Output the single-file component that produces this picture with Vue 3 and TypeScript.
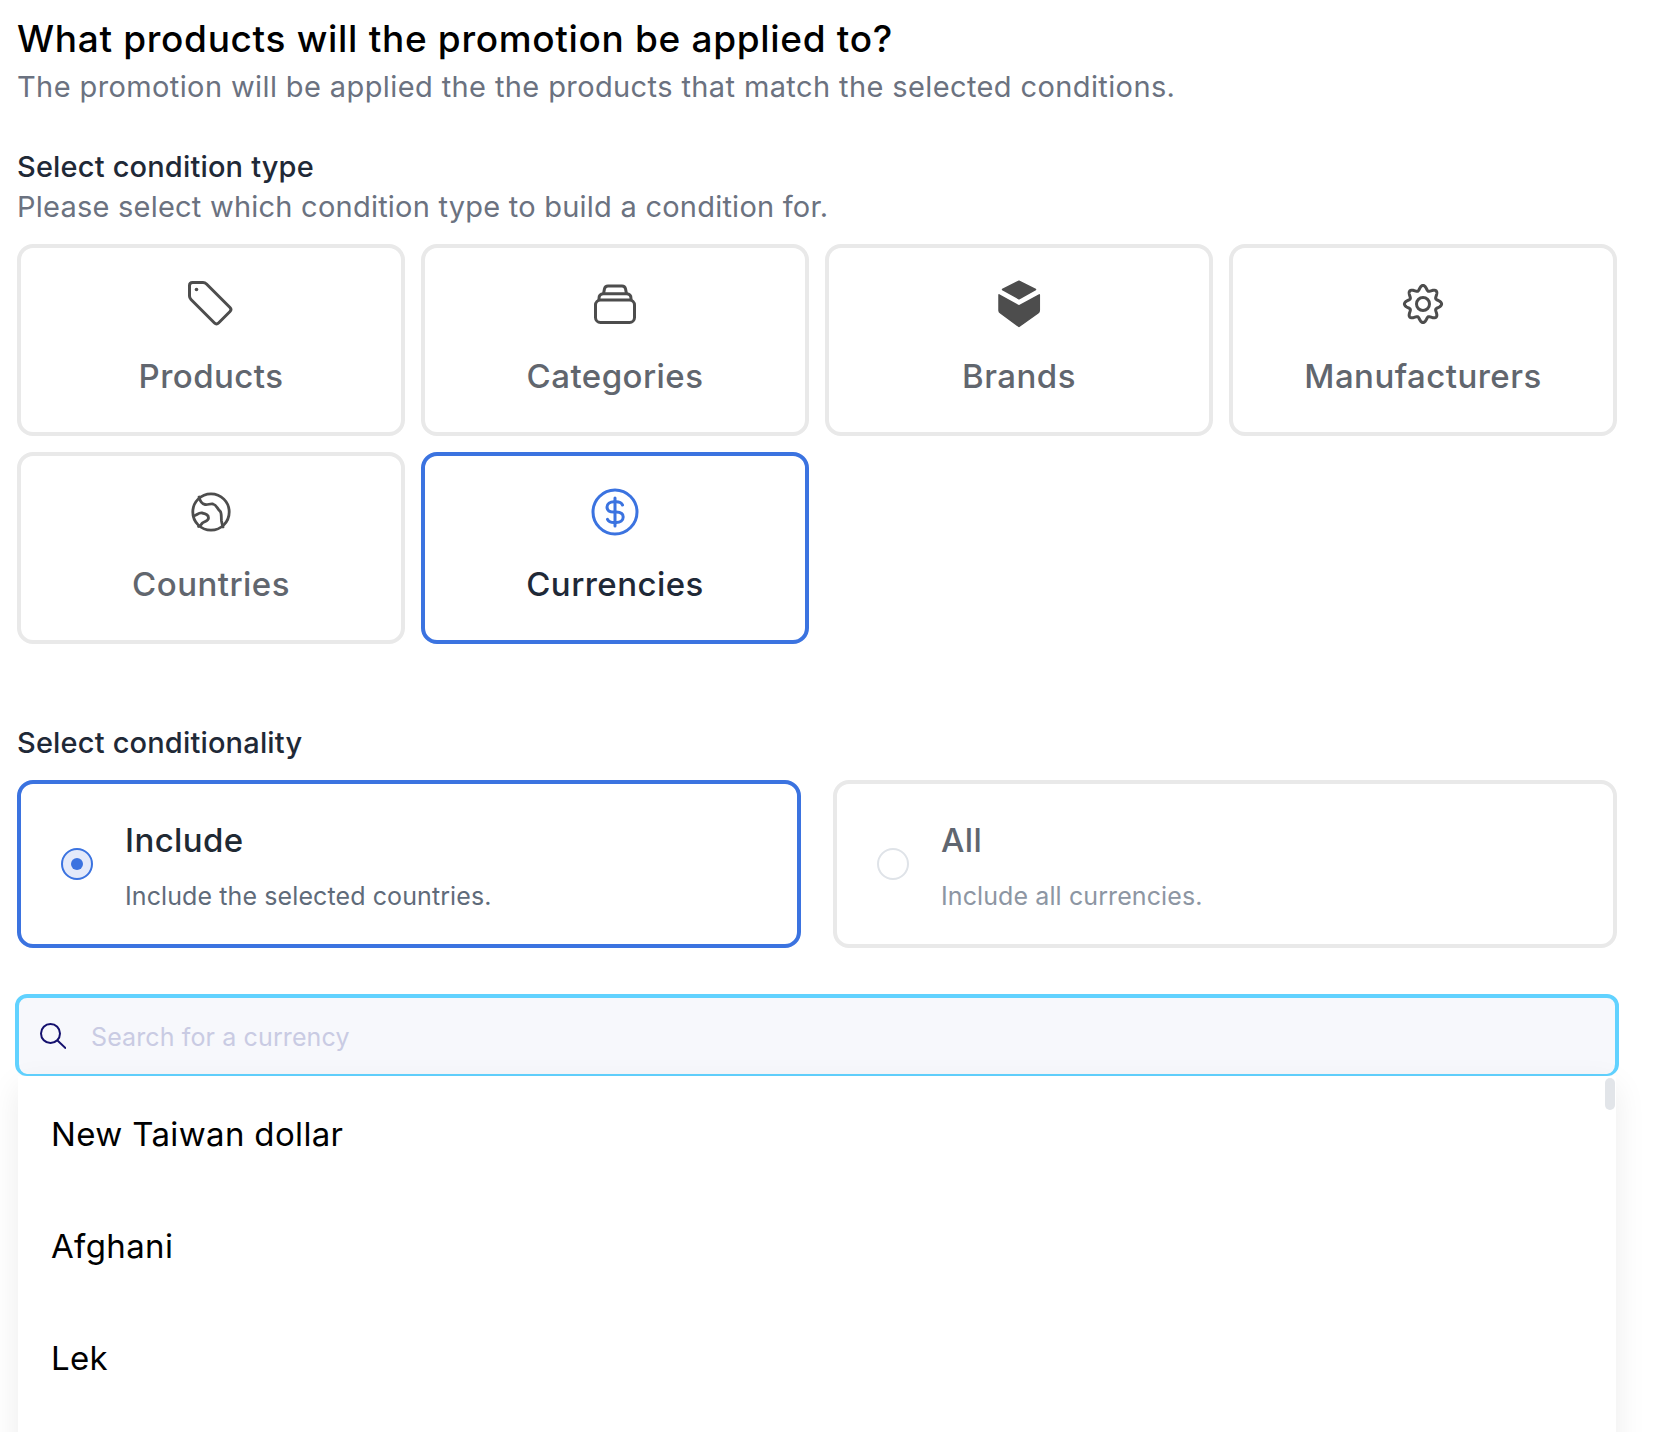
<script setup lang="ts">
const gearPath: string = (() => {
  const pts: string[] = []
  for (let i = 0; i < 240; i++) {
    const t = (i / 240) * Math.PI * 2
    const r = 16.2 + 2.4 * Math.cos(8 * t)
    pts.push(`${(24 + r * Math.sin(t)).toFixed(2)} ${(24 - r * Math.cos(t)).toFixed(2)}`)
  }
  return 'M' + pts.join('L') + 'Z'
})()

const currencies: string[] = ['New Taiwan dollar', 'Afghani', 'Lek']
</script>

<template>
  <main class="page">
    <h1 class="title">What products will the promotion be applied to?</h1>
    <p class="subtitle">The promotion will be applied the the products that match the selected conditions.</p>

    <h2 class="label first">Select condition type</h2>
    <p class="hint">Please select which condition type to build a condition for.</p>

    <div class="types">
      <div class="type">
        <svg class="icon" viewBox="0 0 48 48" fill="none" stroke="#4d4d4d" stroke-width="3" stroke-linejoin="round">
          <path d="M5.5 2.5H16q2 0 3.5 1.5L43 27.5q2 2 0 4L31.5 43q-2 2-4 0L4 19.5Q2.5 18 2.5 16V5.5q0-3 3-3Z" />
          <circle cx="9.5" cy="9.5" r="1.8" fill="#4d4d4d" stroke="none" />
        </svg>
        <span class="type-name">Products</span>
      </div>
      <div class="type">
        <svg class="icon" viewBox="0 0 48 48" fill="none" stroke="#4d4d4d" stroke-width="3">
          <rect x="4.5" y="20" width="39" height="22.5" rx="5" />
          <path d="M8 20v-1.5q0-4.5 4.5-4.7h23q4.500 .2 4.500 4.700V20" />
          <path d="M12.500 13.800l1-5q.6-2.800 3.500-2.800h14q2.900 0 3.500 2.800l1 5" />
        </svg>
        <span class="type-name">Categories</span>
      </div>
      <div class="type">
        <svg class="icon" viewBox="0 0 48 48" fill="#4d4d4d" stroke="#4d4d4d" stroke-width="1.500" stroke-linejoin="round">
          <path d="M24 1.200L40.500 9.500L24 18.800L7.500 9.500Z" />
          <path d="M4 14.800L24 26L44.300 14.800V30.500Q44.300 32 43 33L24 46.500L5.500 33Q4 32 4 30.500Z" />
        </svg>
        <span class="type-name">Brands</span>
      </div>
      <div class="type">
        <svg class="icon" viewBox="0 0 48 48" fill="none" stroke="#4d4d4d" stroke-width="3">
          <path :d="gearPath" />
          <circle cx="24" cy="24" r="6.500" />
        </svg>
        <span class="type-name">Manufacturers</span>
      </div>
      <div class="type">
        <svg class="icon" viewBox="0 0 48 48" fill="none" stroke="#4d4d4d" stroke-width="2.800" stroke-linecap="round" stroke-linejoin="round">
          <circle cx="24" cy="24" r="18.200" />
          <path d="M12 9c1 4 3 7 6 7.500c3 .5 5-1 8-.5c4 .8 4 5 7 7c2 2 1 6 1.500 10c.3 2 1 4 1.500 6" />
          <path d="M6.500 28c3-.5 5-3.500 8.500-3c3 .5 6.500 2 6.500 5c0 3-4 3.500-6 5c-1.500 1-1.500 3-4 3.500" />
        </svg>
        <span class="type-name">Countries</span>
      </div>
      <div class="type active">
        <svg class="icon" viewBox="0 0 48 48" fill="none" stroke="#3b73e0" stroke-width="3" stroke-linecap="round">
          <circle cx="24" cy="24" r="22" />
          <path d="M31.500 17c-1-2-3.500-3.200-6.500-3.200h-2c-4 0-7 2-7 5.300s3 5 7 5h2.200c4 0 7 1.700 7 5s-3 5.500-7 5.500h-2.200c-3 0-5.500-1-6.500-3.200" />
          <path d="M24 10v28" />
        </svg>
        <span class="type-name">Currencies</span>
      </div>
    </div>

    <h2 class="label second">Select conditionality</h2>
    <div class="modes">
      <div class="mode active">
        <span class="radio checked"><span class="dot"></span></span>
        <div class="mode-text">
          <span class="mode-name">Include</span>
          <span class="mode-desc">Include the selected countries.</span>
        </div>
      </div>
      <div class="mode">
        <span class="radio"></span>
        <div class="mode-text">
          <span class="mode-name">All</span>
          <span class="mode-desc">Include all currencies.</span>
        </div>
      </div>
    </div>

    <div class="search">
      <svg class="search-icon" viewBox="0 0 26 26" fill="none" stroke="#14106e" stroke-width="2">
        <circle cx="10.500" cy="10.500" r="9.500" />
        <path d="M17.500 17.500L26 25.500" />
      </svg>
      <span class="placeholder">Search for a currency</span>
    </div>

    <div class="dropdown">
      <span class="thumb"></span>
      <div v-for="c in currencies" :key="c" class="item">{{ c }}</div>
    </div>
  </main>
</template>

<style scoped>
.page {
  box-sizing: border-box;
  width: 1654px;
  height: 1432px;
  overflow: hidden;
  padding: 12px 37px 0 17px;
  font-family: Inter, "Liberation Sans", sans-serif;
  background: #fff;
}
.title {
  margin: 0;
  font-size: 37px;
  line-height: 54px;
  font-weight: 500;
  color: #000;
  letter-spacing: 0.68px;
}
.subtitle {
  margin: 0;
  font-size: 29px;
  line-height: 42px;
  font-weight: 400;
  color: #6b7280;
  letter-spacing: 0.39px;
}
.label {
  margin: 0;
  font-size: 29px;
  line-height: 42px;
  font-weight: 500;
  color: #1f2937;
  letter-spacing: 0.17px;
}
.label.first { margin-top: 38px; }
.label.second { margin-top: 78px; }
.hint {
  margin: 0 0 18px;
  font-size: 29px;
  line-height: 38px;
  color: #6b7280;
  letter-spacing: 0.23px;
}
.types {
  display: grid;
  grid-template-columns: repeat(4, 388px);
  gap: 16px;
}
.type {
  box-sizing: border-box;
  height: 192px;
  padding-top: 32px;
  border: 4px solid #e9e9e9;
  border-radius: 16px;
  display: flex;
  flex-direction: column;
  align-items: center;
  gap: 24px;
}
.type.active { border-color: #3b73e0; }
.icon { width: 48px; height: 48px; display: block; }
.type-name {
  font-size: 33px;
  line-height: 48px;
  font-weight: 500;
  color: #61666e;
  letter-spacing: 0.45px;
}
.type.active .type-name { color: #1f2937; }
.modes {
  margin-top: 16px;
  display: grid;
  grid-template-columns: repeat(2, 784px);
  gap: 32px;
}
.mode {
  box-sizing: border-box;
  height: 168px;
  padding-left: 40px;
  border: 4px solid #e9e9e9;
  border-radius: 16px;
  display: flex;
  align-items: center;
  gap: 32px;
}
.mode.active { border-color: #3b73e0; }
.radio {
  box-sizing: border-box;
  width: 32px;
  height: 32px;
  border-radius: 50%;
  border: 2px solid #dfe3e8;
  display: flex;
  align-items: center;
  justify-content: center;
}
.radio.checked { border-color: #3b73e0; background: #e4eafa; }
.dot { width: 12px; height: 12px; border-radius: 50%; background: #3b73e0; }
.mode-text { display: flex; flex-direction: column; gap: 14px; padding-top: 2px; }
.mode-name {
  font-size: 33px;
  line-height: 48px;
  font-weight: 500;
  color: #5f6670;
  letter-spacing: 0.4px;
}
.mode-desc {
  font-size: 25px;
  line-height: 36px;
  color: #8d96a3;
  letter-spacing: 0.1px;
}
.mode.active .mode-name { color: #1f2933; }
.mode.active .mode-desc { color: #5f6b7a; }
.search {
  box-sizing: border-box;
  width: 1604px;
  height: 82px;
  margin: 46px 0 0 -2px;
  padding-left: 21px;
  border: 4px solid #61d2ff;
  border-bottom-width: 2px;
  border-radius: 12px;
  background: #f7f8fc;
  display: flex;
  align-items: center;
  gap: 25px;
}
.search-icon { width: 26px; height: 26px; display: block; flex: none; }
.placeholder {
  font-size: 25px;
  line-height: 36px;
  padding-top: 2px;
  color: #c9cbe3;
  letter-spacing: 0.12px;
}
.dropdown {
  position: relative;
  box-sizing: border-box;
  width: 1598px;
  min-height: 420px;
  margin: 0 0 0 1px;
  padding-top: 2px;
  background: #fff;
  box-shadow: 0 10px 30px rgba(0, 0, 0, 0.08);
}
.thumb {
  position: absolute;
  top: 2px;
  right: 1px;
  width: 10px;
  height: 32px;
  border-radius: 5px;
  background: #e2e5e9;
}
.item {
  height: 112px;
  padding-left: 33px;
  display: flex;
  align-items: center;
  font-size: 33px;
  color: #000;
  letter-spacing: 0.35px;
}
</style>

<style>
html, body { overflow: hidden; }
</style>
